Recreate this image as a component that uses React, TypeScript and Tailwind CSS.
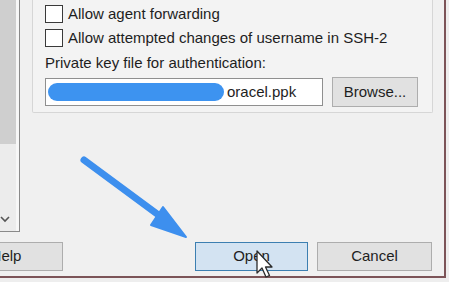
import React from 'react';

const Checkbox: React.FC<{ label: string }> = ({ label }) => (
  <div className="flex items-center h-[18px]">
    <div className="w-[18px] h-[18px] border border-[#3a3a3a] bg-white shrink-0" />
    <span className="ml-[5px] text-[15px] leading-[18px] text-[#1e1e1e] whitespace-nowrap">{label}</span>
  </div>
);

const Arrow: React.FC = () => (
  <svg className="absolute left-0 top-0 pointer-events-none" width="449" height="282" viewBox="0 0 449 282">
    <line x1="84" y1="160" x2="168" y2="222" stroke="#3d8fee" strokeWidth="7" strokeLinecap="round" />
    <polygon points="186,237 163,207 151,225" fill="#3d8fee" stroke="#3d8fee" strokeWidth="2" strokeLinejoin="round" />
  </svg>
);

const Cursor: React.FC = () => (
  <svg className="absolute left-[256px] top-[250px] pointer-events-none" width="20" height="30" viewBox="0 0 20 30">
    <path
      d="M1 1 L1 23 L6 18 L10 27 L13.5 25.5 L9.5 17 L16 17 Z"
      fill="#ffffff"
      stroke="#2a2a2a"
      strokeWidth="1.3"
      strokeLinejoin="round"
    />
  </svg>
);

export default function App() {
  return (
    <div className="relative w-[449px] h-[282px] overflow-hidden bg-[#eeeeee] font-['Liberation_Sans',Arial,sans-serif]">
      <div className="w-[446px] h-[278px] bg-[#f0f0f0] border-r-2 border-b-2 border-[#7c5458] flex flex-col">
        <div className="flex h-[232px]">
          {/* tree view, cut off at the left */}
          <div className="w-[20px] h-[232px] border-r border-b border-[#8a8a8a] bg-[#f7f7f7] flex shrink-0">
            <div className="w-[16px] h-full flex flex-col">
              <div className="h-[144px] bg-[#cfcfcf]" />
              <div className="flex-1 bg-[#ececec] flex flex-col justify-end items-center pb-[8px]">
                <svg width="10" height="7" viewBox="0 0 10 7" className="-ml-[6px]">
                  <path d="M1 1 L5 5 L9 1" fill="none" stroke="#555" strokeWidth="1.6" />
                </svg>
              </div>
            </div>
          </div>

          {/* group box */}
          <div className="ml-[12px] w-[401px] h-[113px] border-x border-b border-[#d6d6d6] rounded-b-[2px] bg-[#f3f3f3] pl-[12px] pt-[5px]">
            <div className="flex flex-col gap-[6px]">
              <Checkbox label="Allow agent forwarding" />
              <Checkbox label="Allow attempted changes of username in SSH-2" />
            </div>
            <div className="mt-[7px] text-[15px] leading-[18px] text-[#1e1e1e] whitespace-nowrap">
              Private key file for authentication:
            </div>
            <div className="mt-[5px] flex items-center">
              <div className="w-[278px] h-[28px] border border-[#8f8f8f] bg-white flex items-center pl-[2px]">
                <div className="w-[176px] h-[18px] rounded-full bg-[#3d93f0]" />
                <span className="ml-[3px] text-[15px] text-[#1e1e1e]">oracel.ppk</span>
              </div>
              <button className="ml-[9px] w-[86px] h-[30px] border border-[#adadad] bg-[#e1e1e1] text-[15px] text-[#1e1e1e]">
                Browse...
              </button>
            </div>
          </div>
        </div>

        {/* bottom buttons */}
        <div className="mt-[10px] flex h-[29px]">
          <button className="-ml-[51px] w-[114px] h-[29px] border border-[#adadad] bg-[#e1e1e1] text-[15px] text-[#1e1e1e]">
            Help
          </button>
          <button className="ml-[132px] w-[113px] h-[29px] border border-[#3c7fb1] bg-[#d3e3f2] text-[15px] text-[#1e1e1e]">
            Open
          </button>
          <button className="ml-[9px] w-[115px] h-[29px] border border-[#adadad] bg-[#e1e1e1] text-[15px] text-[#1e1e1e]">
            Cancel
          </button>
        </div>
      </div>

      <Arrow />
      <Cursor />
    </div>
  );
}
